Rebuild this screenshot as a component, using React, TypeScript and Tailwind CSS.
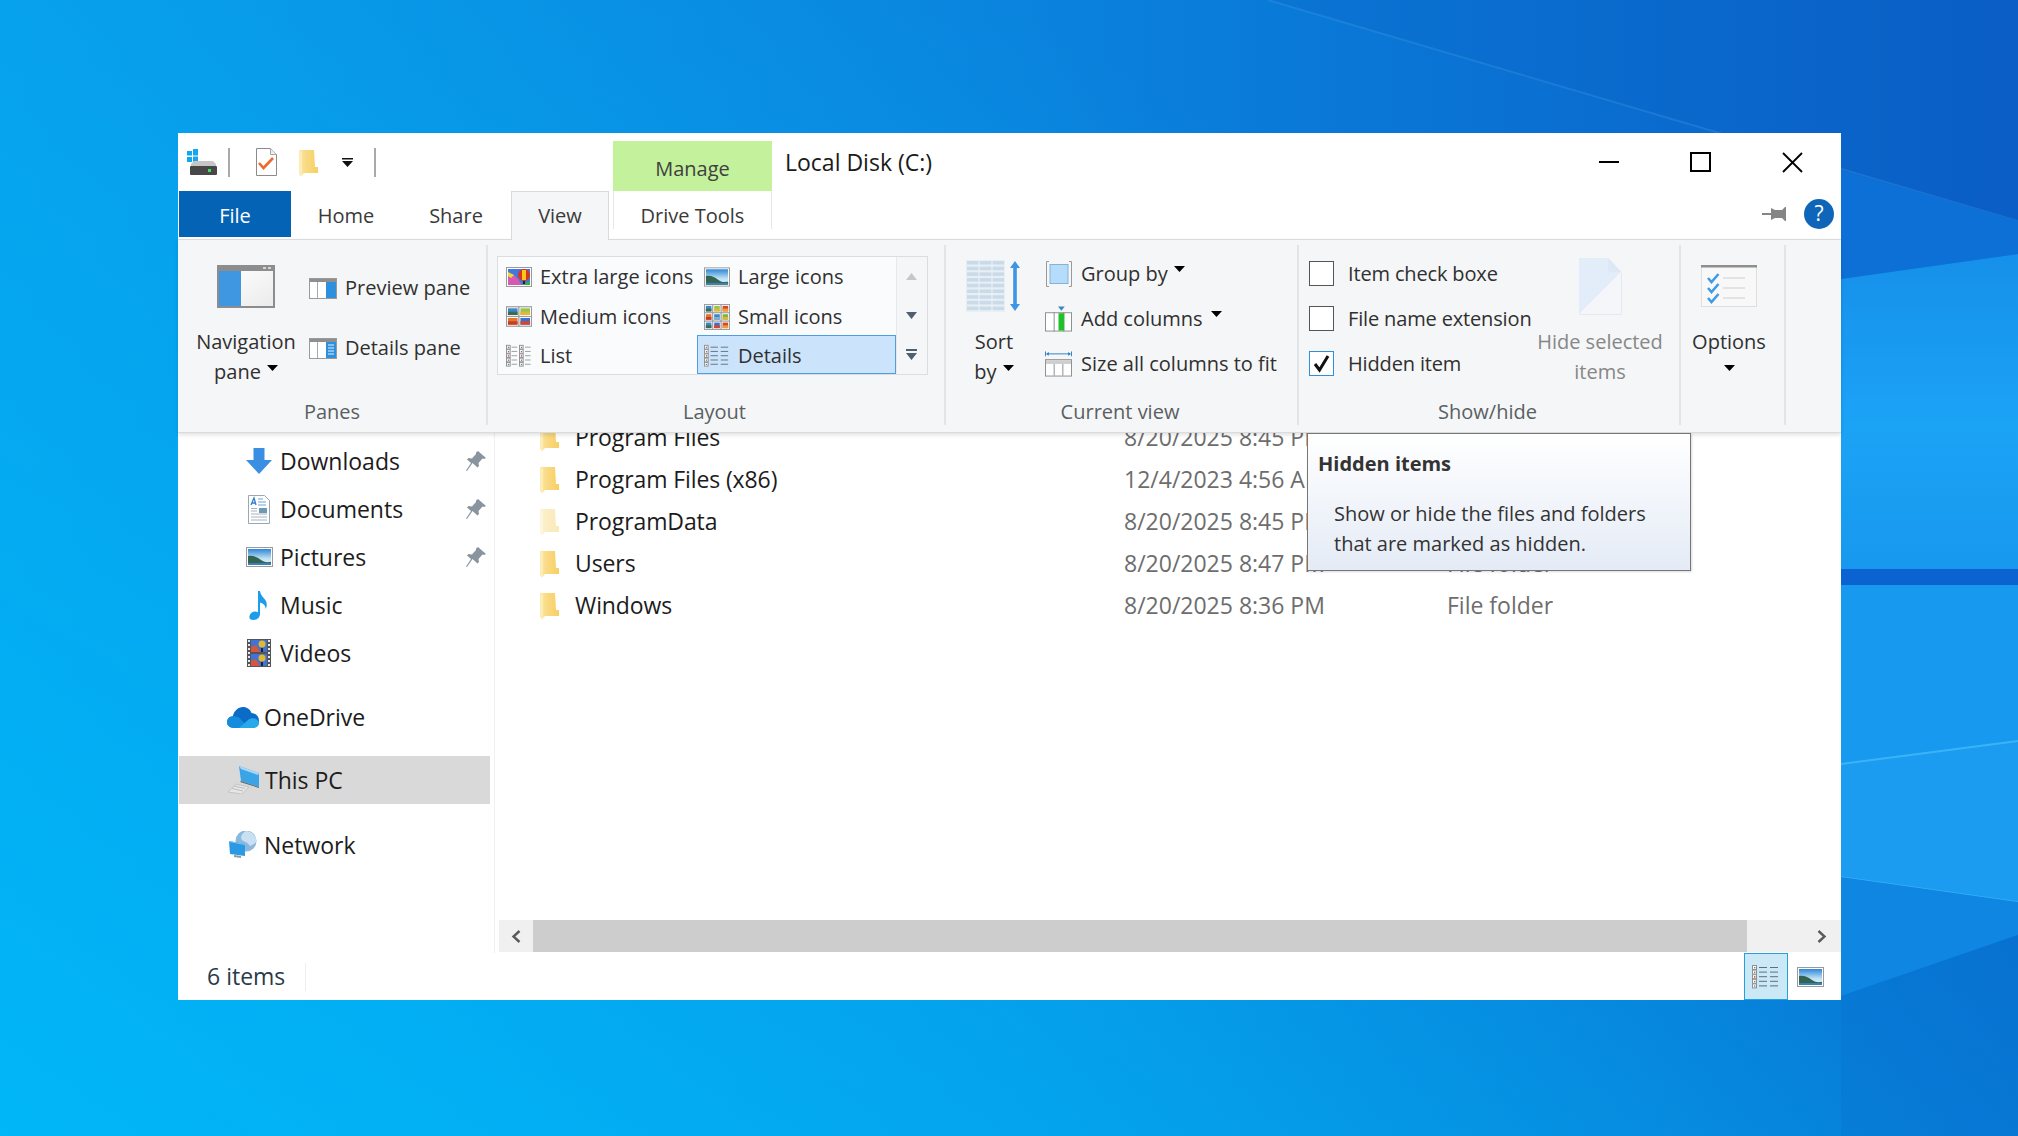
import { ReactNode } from "react";

const Caret = ({ className = "" }: { className?: string }) => (
  <svg width="11" height="6" viewBox="0 0 11 6" className={className}>
    <path d="M0 0h11L5.500 6z" fill="#000" />
  </svg>
);

function Wallpaper() {
  return (
    <svg className="absolute inset-0" width="2018" height="1136" viewBox="0 0 2018 1136">
      <defs>
        <linearGradient id="wall" x1="0" y1="0" x2="1" y2="0">
          <stop offset="0" stopColor="#0a97e8" />
          <stop offset="0.5" stopColor="#0a84de" />
          <stop offset="1" stopColor="#0a5ec6" />
        </linearGradient>
        <linearGradient id="low" x1="0" y1="1" x2="0.75" y2="0.25">
          <stop offset="0" stopColor="#00b8f8" stopOpacity="0.95" />
          <stop offset="1" stopColor="#00b8f8" stopOpacity="0" />
        </linearGradient>
        <linearGradient id="main" x1="0" y1="0" x2="0" y2="1">
          <stop offset="0" stopColor="#1690ea" />
          <stop offset="0.55" stopColor="#1ba3f6" />
          <stop offset="1" stopColor="#1798ee" />
        </linearGradient>
      </defs>
      <rect width="2018" height="1136" fill="url(#wall)" />
      <rect width="2018" height="1136" fill="url(#low)" />
      <polygon points="1268,0 2018,221 2018,0" fill="#0a5cc4" opacity="0.18" />
      <line x1="1268" y1="0" x2="2018" y2="221" stroke="#4fa8ea" strokeOpacity="0.25" strokeWidth="2" />
      <polygon points="1841,170 2018,221 2018,254 1841,279" fill="#0d70d6" />
      <polygon points="1841,279 2018,254 2018,569 1841,569" fill="url(#main)" />
      <rect x="1841" y="569" width="177" height="16" fill="#0a63d0" />
      <polygon points="1841,585 2018,585 2018,741 1841,764" fill="#1699ef" />
      <polygon points="1841,764 2018,741 2018,902 1841,877" fill="#1c9cf1" />
      <line x1="1841" y1="764" x2="2018" y2="741" stroke="#3ab4f7" strokeWidth="2" />
      <line x1="1841" y1="877" x2="2018" y2="902" stroke="#3ab0f5" strokeWidth="1.500" />
      <polygon points="1841,877 2018,902 2018,935 1841,996" fill="#0e86e2" />
      <polygon points="1841,996 2018,935 2018,1136 1841,1136" fill="#0a72d2" opacity="0.35" />
    </svg>
  );
}

function DriveIcon() {
  return (
    <svg width="30" height="26" viewBox="0 0 30 26">
      <path d="M0 2h5v4.500H0zM6 0h5v6.500H6zM0 8h5v5H0zM6 7.500h5v5.500H6z" fill="#12a8ef" />
      <path d="M4 15l3-3h19l3 3v3H4z" fill="#c6c6c6" />
      <rect x="3" y="17" width="27" height="9" rx="1" fill="#474747" />
      <rect x="21" y="20" width="3" height="3" fill="#3ce05a" />
    </svg>
  );
}

function CheckDocIcon() {
  return (
    <svg width="21" height="28" viewBox="0 0 21 28">
      <path d="M.5.500h14l6 6v21H.500z" fill="#fff" stroke="#8b8b8b" />
      <path d="M14.500.500v6h6" fill="#eee" stroke="#a5a5a5" />
      <path d="M3 15l4.500 5L17 10" fill="none" stroke="#ee6a2c" strokeWidth="2.600" />
    </svg>
  );
}

function FolderIcon({ pale = false }: { pale?: boolean }) {
  const id = pale ? "fpale" : "fnorm";
  return (
    <svg width="19" height="27" viewBox="0 0 19 27">
      <defs>
        <linearGradient id={id} x1="0" y1="0" x2="1" y2="0">
          <stop offset="0" stopColor={pale ? "#fdf3d0" : "#fde9a8"} />
          <stop offset="0.35" stopColor={pale ? "#fbeec5" : "#f9da84"} />
          <stop offset="1" stopColor={pale ? "#fbe9b8" : "#f7cf63"} />
        </linearGradient>
      </defs>
      <path d="M0 1h15l1 17h3v6H5l-3 3-2-2z" fill={`url(#${id})`} />
      <path d="M0 1l3 2v24l-1 0-2-2z" fill={pale ? "#fdf6de" : "#fcecb6"} />
    </svg>
  );
}

function NavPaneIcon() {
  return (
    <svg width="58" height="43" viewBox="0 0 58 43">
      <defs>
        <linearGradient id="nvr" x1="0" y1="0" x2="1" y2="1">
          <stop offset="0" stopColor="#fff" />
          <stop offset="1" stopColor="#ebebeb" />
        </linearGradient>
      </defs>
      <rect x="0" y="0" width="58" height="43" fill="#8d8d8d" />
      <rect x="2" y="6" width="54" height="35" fill="url(#nvr)" />
      <rect x="2" y="6" width="22" height="35" fill="#3e97e0" />
      <rect x="46" y="2" width="3" height="2" fill="#d5d5d5" />
      <rect x="51" y="2" width="3" height="2" fill="#d5d5d5" />
    </svg>
  );
}

function PaneIcon({ lines = false }: { lines?: boolean }) {
  return (
    <svg width="28" height="21" viewBox="0 0 28 21">
      <rect x=".5" y=".5" width="27" height="20" fill="#fff" stroke="#9a9a9a" />
      <rect x="1" y="1" width="26" height="3" fill="#8f8f8f" />
      <rect x="8" y="4" width="1" height="16" fill="#a9a9a9" />
      <rect x="17" y="4" width="10" height="16" fill="#2e8fdc" />
      {lines && <path d="M19 7h6M19 10h6M19 13h6M19 16h6" stroke="#e4f1fb" strokeWidth="1" />}
    </svg>
  );
}

function Landscape() {
  return (
    <svg width="27" height="20" viewBox="0 0 27 20">
      <defs>
        <linearGradient id="sky" x1="0" y1="0" x2="0" y2="1">
          <stop offset="0" stopColor="#2f86d8" />
          <stop offset="0.6" stopColor="#bfe2f2" />
          <stop offset="1" stopColor="#dff0f5" />
        </linearGradient>
      </defs>
      <rect x=".5" y=".5" width="26" height="19" fill="#fff" stroke="#9a9a9a" />
      <rect x="2" y="2" width="23" height="16" fill="url(#sky)" />
      <path d="M2 9c5-1 9 1 13 4s7 2 10 2v3H2z" fill="#34644f" />
      <path d="M2 16h23v2H2z" fill="#3a7fb8" />
    </svg>
  );
}

function BalloonIcon() {
  return (
    <svg width="26" height="20" viewBox="0 0 26 20">
      <rect x=".5" y=".5" width="25" height="19" fill="#fff" stroke="#9a9a9a" />
      <rect x="2" y="2" width="22" height="16" fill="#3f78e0" />
      <path d="M2 10l5-3 5 5 4 6H2z" fill="#d55bb0" />
      <path d="M2 5l6 3-3 3-3-2z" fill="#f1d83a" />
      <path d="M16 18l8-4v4z" fill="#3cae3c" />
      <ellipse cx="18" cy="8" rx="6" ry="6" fill="#d9341c" />
      <rect x="16" y="3" width="4" height="10" fill="#f7c91f" />
      <rect x="17" y="14" width="2" height="3" fill="#222" />
    </svg>
  );
}

const tileArt: [string, string][] = [
  ["#3f86c4", "#3d6a55"],
  ["#9ac24e", "#e2b83a"],
  ["#d9472b", "#e9a02f"],
  ["#e0772c", "#c53d27"],
  ["#3f86c4", "#7fb0d4"],
  ["#7ab648", "#d8b93a"],
  ["#3f86c4", "#3d6a55"],
  ["#3b6fd0", "#d8452a"],
  ["#d9472b", "#e9a02f"],
];

function Tiles({ cols, rows, cellW, cellH }: { cols: number; rows: number; cellW: number; cellH: number }) {
  const w = cols * cellW + 1;
  const h = rows * cellH + 1;
  const indexes = Array.from({ length: cols * rows }, (_, i) => i);
  return (
    <svg width={w} height={h} viewBox={`0 0 ${w} ${h}`}>
      <rect x=".5" y=".5" width={w - 1} height={h - 1} fill="#fff" stroke="#9a9a9a" />
      {indexes.map((i) => {
        const x = (i % cols) * cellW;
        const y = Math.floor(i / cols) * cellH;
        const [top, low] = tileArt[cols === 2 ? [0, 1, 3, 7][i] : i];
        return (
          <g key={i}>
            <rect x={x + 0.5} y={y + 0.5} width={cellW} height={cellH} fill="#fff" stroke="#9a9a9a" />
            <rect x={x + 2} y={y + 2} width={cellW - 3} height={cellH - 3} fill={top} />
            <rect x={x + 2} y={y + 2 + (cellH - 3) / 2} width={cellW - 3} height={(cellH - 3) / 2} fill={low} />
          </g>
        );
      })}
    </svg>
  );
}

function ListLines({ columns, dark = false }: { columns: 1 | 2; dark?: boolean }) {
  const rows = [0, 1, 2, 3, 4];
  const stroke = dark ? "#5f6f7c" : "#9a9a9a";
  return (
    <svg width="28" height="24" viewBox="0 0 28 24">
      {rows.map((i) => (
        <g key={i}>
          <rect x=".5" y={i * 4.6 + 0.5} width="4" height="4" fill="#fff" stroke="#8f8f8f" />
          <rect x="2" y={i * 4.6 + 2} width="1.400" height="1.400" fill={i === 2 ? "#b0412c" : "#6f7f8c"} />
          {columns === 1 ? (
            <>
              <path d={`M7 ${i * 4.6 + 2.5}h8`} stroke={stroke} />
              <path d={`M18 ${i * 4.6 + 2.5}h8`} stroke={stroke} />
            </>
          ) : (
            <>
              <rect x="14.500" y={i * 4.6 + 0.5} width="4" height="4" fill="#fff" stroke="#8f8f8f" />
              <rect x="16" y={i * 4.6 + 2} width="1.400" height="1.400" fill={i === 2 ? "#b0412c" : "#6f7f8c"} />
              <path d={`M6 ${i * 4.6 + 2.5}h6`} stroke={stroke} />
              <path d={`M20.500 ${i * 4.6 + 2.5}h6`} stroke={stroke} />
            </>
          )}
        </g>
      ))}
    </svg>
  );
}

function SortIcon() {
  const rows = Array.from({ length: 9 }, (_, i) => i);
  return (
    <svg width="56" height="52" viewBox="0 0 56 52">
      <rect x="0" y="0" width="39" height="52" fill="#e7eef4" />
      {rows.map((i) => (
        <rect key={i} x="1" y={i * 5.7 + 1} width="37" height="3.500" fill="#c9dbe9" />
      ))}
      <path d="M13 0v52M26 0v52" stroke="#eef3f7" />
      <path d="M49 1l5 7h-3.200v36H54l-5 7-5-7h3.200V8H44z" fill="#3d95e3" />
    </svg>
  );
}

function GroupByIcon() {
  return (
    <svg width="26" height="26" viewBox="0 0 26 26">
      <path d="M3 .500H.500v25H3M23 .500h2.500v25H23" fill="none" stroke="#9a9a9a" />
      <rect x="4" y="3.500" width="18" height="19" fill="#b6dcfb" stroke="#84b3d8" />
    </svg>
  );
}

function AddColumnsIcon() {
  return (
    <svg width="28" height="26" viewBox="0 0 28 26">
      <rect x=".5" y="6.500" width="27" height="19" fill="#fff" stroke="#8d8d8d" />
      <path d="M9.500 6v20M19.500 6v20" stroke="#8d8d8d" />
      <rect x="14" y="7" width="6" height="18" fill="#20c12b" />
      <path d="M13.500 0h7L17 4.500z" fill="#3d85c6" />
    </svg>
  );
}

function SizeAllIcon() {
  return (
    <svg width="28" height="26" viewBox="0 0 28 26">
      <path d="M.5 0v5M27.500 0v5" stroke="#2d7fc4" />
      <path d="M2 2.500h24" stroke="#2d7fc4" />
      <path d="M1 2.500L4 .500v4zM27 2.500L24 .500v4z" fill="#2d7fc4" />
      <rect x=".5" y="8.500" width="27" height="17" fill="#fff" stroke="#8d8d8d" />
      <rect x="1" y="9" width="26" height="4" fill="#cfcfcf" />
      <path d="M9.500 13v12M18.500 13v12" stroke="#8d8d8d" />
    </svg>
  );
}

function HideIcon() {
  return (
    <svg width="43" height="57" viewBox="0 0 43 57">
      <path d="M.5 .500h29l13 14v42H.500z" fill="#f4f6fa" stroke="#e6eaf0" />
      <path d="M0 0h29l1 14h12L0 56z" fill="#e3ecf9" />
      <path d="M29 0l13 14H29z" fill="#dde7f5" />
    </svg>
  );
}

function OptionsIcon() {
  const ys = [13, 23, 33];
  return (
    <svg width="56" height="42" viewBox="0 0 56 42">
      <rect x=".5" y="1" width="55" height="40.500" fill="#f8f8f8" stroke="#dedede" />
      <rect x="0" y="0" width="56" height="2.500" fill="#8e8e8e" />
      {ys.map((y) => (
        <g key={y}>
          <path d={`M7 ${y}l3.500 4 7-8`} fill="none" stroke="#3d9be8" strokeWidth="2.500" />
          <path d={`M22 ${y}h22`} stroke="#dcdcdc" strokeWidth="1.500" />
        </g>
      ))}
    </svg>
  );
}

function DownloadsIcon() {
  return (
    <svg width="26" height="26" viewBox="0 0 26 26">
      <path d="M7.500 0h11v12H26L13 26 0 12h7.500z" fill="#3a8fe2" />
    </svg>
  );
}

function DocumentsIcon() {
  return (
    <svg width="22" height="29" viewBox="0 0 22 29">
      <path d="M.5.500h16l5 5v23H.500z" fill="#fff" stroke="#9aa7b4" />
      <path d="M3 10l3-7 2 7M4 8h3" fill="none" stroke="#2f7fd0" strokeWidth="1.300" />
      <path d="M10 4h5M10 7h8M10 10h8" stroke="#6aa5da" />
      <rect x="11" y="13" width="8" height="5" fill="#6d9ab0" />
      <path d="M3 13.500h6M3 16h6M3 19h16M3 22h16M3 25h16" stroke="#a7b2bd" />
    </svg>
  );
}

function MusicIcon() {
  return (
    <svg width="20" height="29" viewBox="0 0 20 29">
      <path d="M9 0h2c.5 4 3 6 5 8.500 2.500 3.500 2 7 .5 9.500.3-3-1.500-5.500-5.500-6.500V23c0 3.500-3 6-6.500 6S0 27 .5 25c.5-2.500 3-4.500 5.500-4.500 1.200 0 2.200.3 3 .8z" fill="#1c9ce9" />
    </svg>
  );
}

function VideosIcon() {
  const holes = [1, 5, 9, 13, 17, 21, 25];
  return (
    <svg width="24" height="28" viewBox="0 0 24 28">
      <rect width="24" height="28" fill="#555" />
      {holes.map((y) => (
        <g key={y}>
          <rect x="1" y={y} width="2" height="2" fill="#e9e9e9" />
          <rect x="21" y={y} width="2" height="2" fill="#e9e9e9" />
        </g>
      ))}
      <rect x="4" y="1" width="16" height="12" fill="#3f73d8" />
      <rect x="4" y="15" width="16" height="12" fill="#3f73d8" />
      <path d="M4 13V8l5-2 4 7zM4 27v-5l5-2 4 7z" fill="#d8563c" />
      <circle cx="15" cy="5" r="3.500" fill="#e2b92b" />
      <circle cx="15" cy="19" r="3.500" fill="#e2b92b" />
      <path d="M14 9h2v4h-2zM14 23h2v4h-2z" fill="#222" />
    </svg>
  );
}

function OneDriveIcon() {
  return (
    <svg width="32" height="21" viewBox="0 0 32 21">
      <path d="M7 21C3 21 0 18.500 0 15.300 0 12 2.500 9.500 5.800 9.300 7 4 11 0 16 0c4 0 7.300 2.500 8.500 6C29 6.300 32 9.500 32 13.500S29 21 25 21z" fill="#0b6cc8" />
      <path d="M7 21C3 21 0 18.500 0 15.300 0 12 2.500 9.500 5.800 9.300c3-.5 5 .5 7 2l9 9.700z" fill="#1490df" opacity="0.9" />
      <path d="M12 21l9-8c2-1.800 6-2.500 8.500-.8 1.500 1 2.500 2.800 2.500 4.300 0 2.500-3 4.500-6 4.500z" fill="#28a8ea" />
    </svg>
  );
}

function ThisPcIcon() {
  return (
    <svg width="32" height="28" viewBox="0 0 32 28">
      <path d="M11 0l20 7v14L13 15z" fill="#3aa4e6" />
      <path d="M11 0l20 7-1 2L13 3z" fill="#a8d8f5" />
      <path d="M13 15l18 6v1L12 16z" fill="#5a6c7c" />
      <path d="M8 18l13 3-7 7-14-2z" fill="#e6e6e6" stroke="#c4c4c4" />
      <path d="M6 20l11 2.500M4 22.500l11 2.500" stroke="#bdbdbd" />
    </svg>
  );
}

function NetworkIcon() {
  return (
    <svg width="28" height="28" viewBox="0 0 28 28">
      <circle cx="17" cy="10" r="10.500" fill="#8cb8dd" />
      <path d="M17 0c-5 3-6 7-4 9s6 2 8 6c3-1 6-3 6.500-5C27 4 22 0 17 0z" fill="#c9e0f2" />
      <path d="M0 10l16 3v12L1 23z" fill="#2b9ae4" />
      <path d="M0 10l16 3v1L0 11z" fill="#7fc6f0" />
      <path d="M5 24l7 1v2l-7-1z" fill="#8a9aa6" />
    </svg>
  );
}

function PinIcon() {
  return (
    <svg width="20" height="20" viewBox="0 0 20 20">
      <path d="M12 0l8 7-2 1-1.500-.5-4 4.500.5 3-1.500 1.500L6.500 12 1 20l-1-.5L5 12 1 8.500 2.500 7l3.500.5 4-4.500L10 1.500z" fill="#8a949e" />
    </svg>
  );
}

function RibbonPin() {
  return (
    <svg width="24" height="16" viewBox="0 0 24 16">
      <path d="M0 7h9v2H0z" fill="#858585" />
      <path d="M9 2l4 2h7l3-3h1v14h-1l-3-3h-7l-4 2z" fill="#858585" />
    </svg>
  );
}

function ScrollArrow({ dir }: { dir: "left" | "right" }) {
  return (
    <svg width="10" height="13" viewBox="0 0 10 13">
      <path d={dir === "left" ? "M8.500 1L2.500 6.500l6 5.500" : "M1.500 1l6 5.500-6 5.500"} fill="none" stroke="#5a5a5a" strokeWidth="2.400" />
    </svg>
  );
}

function BigButton({
  icon,
  first,
  second,
  width,
  muted = false,
}: {
  icon: ReactNode;
  first: string;
  second?: ReactNode;
  width: string;
  muted?: boolean;
}) {
  return (
    <div className={`${width} flex flex-col items-center leading-[30px] ${muted ? "text-[#878787]" : "text-[#303030]"}`}>
      <div className="h-[82px] flex items-center">{icon}</div>
      <span className="whitespace-nowrap">{first}</span>
      <span className="whitespace-nowrap flex items-start gap-[6px] h-[30px]">{second}</span>
    </div>
  );
}

function Group({
  label,
  width,
  labelPad = "pr-[3px]",
  children,
}: {
  label: string;
  width: string;
  labelPad?: string;
  children: ReactNode;
}) {
  return (
    <div className={`${width} h-[180px] flex flex-col border-r-2 border-[#e3e4e5]`}>
      <div className="h-[154px] flex">{children}</div>
      <div className={`h-[26px] leading-[26px] text-center text-[#5a5f63] ${labelPad}`}>{label}</div>
    </div>
  );
}

function GalleryItem({ icon, label, active = false, pad }: { icon: ReactNode; label: string; active?: boolean; pad: string }) {
  return (
    <div
      className={`flex items-center gap-[8px] text-[#303030] ${pad} ${
        active ? "bg-[#cce4fb] border border-[#4f9ee0]" : ""
      }`}
    >
      <div className="w-[26px] flex justify-center shrink-0">{icon}</div>
      <span className="whitespace-nowrap">{label}</span>
    </div>
  );
}

function SmallRow({ icon, children }: { icon: ReactNode; children: ReactNode }) {
  return (
    <div className="h-[45px] flex items-center gap-[9px] text-[#303030] whitespace-nowrap">
      <div className="w-[27px] flex justify-center shrink-0">{icon}</div>
      {children}
    </div>
  );
}

function CheckRow({ label, checked = false }: { label: string; checked?: boolean }) {
  return (
    <div className="h-[45px] flex items-center gap-[14px] text-[#303030] whitespace-nowrap tracking-[-0.15px]">
      <div
        className={`w-[25px] h-[25px] shrink-0 bg-white flex items-center justify-center border ${
          checked ? "border-[#2f8fdf]" : "border-[#555]"
        }`}
      >
        {checked && (
          <svg width="17" height="19" viewBox="0 0 17 19">
            <path d="M2 10l4.500 6L15 2" fill="none" stroke="#111" strokeWidth="3" />
          </svg>
        )}
      </div>
      {label}
    </div>
  );
}

function Ribbon() {
  return (
    <div className="relative z-10 h-[194px] bg-[#f5f6f7] border-y border-[#dadbdc] pt-[5px] flex shadow-[0_2px_4px_rgba(0,0,0,0.12)] text-[20px]">
      <Group label="Panes" width="w-[310px]" labelPad="">
        <div className="pl-[12px] flex">
          <BigButton
            width="w-[112px]"
            icon={<NavPaneIcon />}
            first="Navigation"
            second={
              <>
                pane <Caret className="mt-[8px]" />
              </>
            }
          />
          <div className="ml-[7px] pt-[13px] flex flex-col text-[#303030]">
            <div className="h-[60px] flex items-center gap-[8px] whitespace-nowrap">
              <PaneIcon />
              Preview pane
            </div>
            <div className="h-[60px] flex items-center gap-[8px] whitespace-nowrap">
              <PaneIcon lines />
              Details pane
            </div>
          </div>
        </div>
      </Group>

      <Group label="Layout" width="w-[458px]">
        <div className="ml-[9px] mt-[11px] w-[431px] h-[119px] flex border border-[#dcdddf] bg-[#fafbfd]">
          <div className="w-[398px] grid grid-cols-[199px_199px] grid-rows-[39px_39px_39px]">
            <GalleryItem pad="pl-[8px]" icon={<BalloonIcon />} label="Extra large icons" />
            <GalleryItem pad="pl-[7px]" icon={<Landscape />} label="Large icons" />
            <GalleryItem pad="pl-[8px] pt-[2px]" icon={<Tiles cols={2} rows={2} cellW={13} cellH={10} />} label="Medium icons" />
            <GalleryItem pad="pl-[7px] pt-[2px]" icon={<Tiles cols={3} rows={3} cellW={9} cellH={9} />} label="Small icons" />
            <GalleryItem pad="pl-[8px] pt-[2px]" icon={<ListLines columns={2} />} label="List" />
            <GalleryItem pad="pl-[6px] pt-[2px]" icon={<ListLines columns={1} dark />} label="Details" active />
          </div>
          <div className="flex-1 bg-[#f5f6f7] border-l border-[#e8e9ea] flex flex-col items-center pr-[2px]">
            <div className="h-[39px] flex items-center">
              <svg width="11" height="7" viewBox="0 0 11 7">
                <path d="M5.500 0L11 7H0z" fill="#c4c8cc" />
              </svg>
            </div>
            <div className="h-[39px] flex items-center">
              <svg width="11" height="7" viewBox="0 0 11 7">
                <path d="M0 0h11L5.500 7z" fill="#4f5f6f" />
              </svg>
            </div>
            <div className="h-[39px] flex items-center">
              <svg width="11" height="11" viewBox="0 0 11 11">
                <path d="M0 0h11v2H0zM0 4h11L5.500 11z" fill="#4f5f6f" />
              </svg>
            </div>
          </div>
        </div>
      </Group>

      <Group label="Current view" width="w-[353px]">
        <div className="ml-[13px] flex">
          <BigButton
            width="w-[70px]"
            icon={<SortIcon />}
            first="Sort"
            second={
              <>
                by <Caret className="mt-[8px]" />
              </>
            }
          />
          <div className="ml-[16px] pt-[6px] flex flex-col">
            <SmallRow icon={<GroupByIcon />}>
              Group by <Caret className="mb-[10px] -ml-[3px]" />
            </SmallRow>
            <SmallRow icon={<AddColumnsIcon />}>
              Add columns <Caret className="mb-[10px] -ml-[1px]" />
            </SmallRow>
            <SmallRow icon={<SizeAllIcon />}>Size all columns to fit</SmallRow>
          </div>
        </div>
      </Group>

      <Group label="Show/hide" width="w-[382px]">
        <div className="ml-[10px] flex">
          <div className="w-[228px] pt-[6px] flex flex-col overflow-hidden">
            <CheckRow label="Item check boxe" />
            <CheckRow label="File name extension" />
            <CheckRow label="Hidden item" checked />
          </div>
          <div className="-ml-[2px]">
            <BigButton width="w-[130px]" icon={<HideIcon />} first="Hide selected" second="items" muted />
          </div>
        </div>
      </Group>

      <Group label="" width="w-[105px]">
        <div className="ml-[3px]">
          <BigButton width="w-[90px]" icon={<OptionsIcon />} first="Options" second={<Caret className="mt-[8px]" />} />
        </div>
      </Group>
    </div>
  );
}

function NavRow({ icon, label, pinned }: { icon: ReactNode; label: string; pinned?: boolean }) {
  return (
    <div className="h-[48px] pl-[67px] pr-[8px] flex items-center">
      <div className="w-[28px] flex justify-center shrink-0">{icon}</div>
      <span className="ml-[7px]">{label}</span>
      {pinned && (
        <span className="ml-auto">
          <PinIcon />
        </span>
      )}
    </div>
  );
}

function NavTop({ icon, label, className = "" }: { icon: ReactNode; label: string; className?: string }) {
  return (
    <div className={`h-[48px] pl-[49px] flex items-center ${className}`}>
      <div className="w-[32px] flex justify-center shrink-0">{icon}</div>
      <span className="ml-[5px]">{label}</span>
    </div>
  );
}

const files: { name: string; date: string; pale?: boolean }[] = [
  { name: "Program Files", date: "8/20/2025 8:45 PM" },
  { name: "Program Files (x86)", date: "12/4/2023 4:56 AM" },
  { name: "ProgramData", date: "8/20/2025 8:45 PM", pale: true },
  { name: "Users", date: "8/20/2025 8:47 PM" },
  { name: "Windows", date: "8/20/2025 8:36 PM" },
];

export default function App() {
  return (
    <div className="relative w-[2018px] h-[1136px] overflow-hidden pl-[178px] pt-[133px] font-['Open_Sans',sans-serif]">
      <Wallpaper />
      <div className="relative w-[1663px] h-[867px] bg-white flex flex-col">
        {/* title row */}
        <div className="h-[58px] flex items-center pl-[9px] shrink-0">
          <DriveIcon />
          <div className="ml-[11px] w-[2px] h-[29px] bg-[#a9a9a9]" />
          <div className="ml-[26px]">
            <CheckDocIcon />
          </div>
          <div className="ml-[22px]">
            <FolderIcon />
          </div>
          <div className="ml-[24px]">
            <svg width="11" height="9" viewBox="0 0 11 9">
              <path d="M0 0h11v1.500H0zM0 3h11L5.500 9z" fill="#111" />
            </svg>
          </div>
          <div className="ml-[21px] w-[2px] h-[29px] bg-[#a9a9a9]" />
          <div className="ml-[237px] self-end w-[159px] h-[50px] bg-[#c3f19c] text-[#404040] text-[20px] text-center leading-[56px]">
            Manage
          </div>
          <div className="ml-[13px] text-[23px] text-[#1a1a1a]">Local Disk (C:)</div>
          <div className="ml-auto flex items-center">
            <div className="w-[20px] h-[2px] bg-black" />
            <div className="ml-[71px] w-[21px] h-[20px] border-2 border-black" />
            <svg className="ml-[71px] mr-[38px]" width="21" height="21" viewBox="0 0 21 21">
              <path d="M1 1l19 19M20 1L1 20" stroke="#000" strokeWidth="1.800" />
            </svg>
          </div>
        </div>

        {/* tabs */}
        <div className="h-[48px] shrink-0 flex text-[20px] text-[#3a3a3a] pl-[1px] relative">
          <div className="w-[112px] h-[46px] pt-[3px] bg-[#0563b5] text-white flex items-center justify-center">File</div>
          <div className="w-[110px] pt-[1px] flex items-center justify-center">Home</div>
          <div className="w-[110px] pt-[1px] flex items-center justify-center">Share</div>
          <div className="w-[98px] h-[49px] bg-[#f5f6f7] border-x border-t border-[#d9dadb] flex items-center justify-center z-20">View</div>
          <div className="ml-[4px] w-[159px] h-[38px] border-x border-[#e6e6e6] flex items-start pt-[10px] justify-center">Drive Tools</div>
          <div className="ml-auto flex items-center pb-[2px]">
            <RibbonPin />
            <div className="ml-[18px] mr-[7px] w-[30px] h-[30px] rounded-full bg-[#0f66b8] text-white text-[21px] flex items-center justify-center">?</div>
          </div>
        </div>

        <Ribbon />

        {/* body */}
        <div className="h-[520px] flex text-[23px] text-[#1c1c1c]">
          <div className="w-[317px] shrink-0 border-r border-[#f1f1f1] pt-[4px]">
            <NavRow icon={<DownloadsIcon />} label="Downloads" pinned />
            <NavRow icon={<DocumentsIcon />} label="Documents" pinned />
            <NavRow icon={<Landscape />} label="Pictures" pinned />
            <NavRow icon={<MusicIcon />} label="Music" />
            <NavRow icon={<VideosIcon />} label="Videos" />
            <NavTop className="mt-[16px]" icon={<OneDriveIcon />} label="OneDrive" />
            <NavTop className="mt-[15px] mr-[4px] ml-[1px] pl-[48px] bg-[#d9d9d9]" icon={<ThisPcIcon />} label="This PC" />
            <NavTop className="mt-[17px]" icon={<NetworkIcon />} label="Network" />
          </div>

          <div className="flex-1 min-w-0 flex flex-col">
            <div className="flex-1 min-h-0 overflow-hidden">
              <div className="-mt-[17px]">
                {files.map((f) => (
                  <div key={f.name} className="h-[42px] pl-[45px] flex items-center">
                    <div className="w-[18px] shrink-0">
                      <FolderIcon pale={f.pale} />
                    </div>
                    <span className="ml-[17px] w-[549px] shrink-0 tracking-[-0.1px]">{f.name}</span>
                    <span className="w-[323px] shrink-0 text-[#6d6d6d]">{f.date}</span>
                    <span className="text-[#6d6d6d]">File folder</span>
                  </div>
                ))}
              </div>
            </div>
            <div className="h-[32px] mb-[1px] ml-[4px] shrink-0 flex bg-[#f0f0f0]">
              <div className="w-[33px] flex items-center justify-center">
                <ScrollArrow dir="left" />
              </div>
              <div className="ml-[1px] w-[1214px] bg-[#cdcdcd]" />
              <div className="flex-1 flex items-center justify-end pr-[14px]">
                <ScrollArrow dir="right" />
              </div>
            </div>
          </div>
        </div>

        {/* status bar */}
        <div className="h-[47px] flex items-center text-[23px] text-[#2a3a4a]">
          <span className="ml-[29px]">6 items</span>
          <div className="ml-[20px] w-px h-[28px] bg-[#eeeeee]" />
          <div className="ml-auto h-full w-[44px] bg-[#cbe8f6] border border-[#26a0da] flex items-center justify-center">
            <ListLines columns={1} dark />
          </div>
          <div className="ml-[9px] mr-[17px]">
            <Landscape />
          </div>
        </div>

        {/* tooltip */}
        <div className="absolute z-30 left-[1129px] top-[300px] w-[384px] h-[138px] border border-[#767676] bg-[linear-gradient(#ffffff,#e4ebf6)] shadow-[1px_1px_2px_rgba(0,0,0,0.15)] text-[#333]">
          <div className="pl-[10px] pt-[12px] font-bold text-[20px] leading-[36px]">Hidden items</div>
          <div className="pl-[26px] pt-[17px] text-[20px] leading-[30px]">
            Show or hide the files and folders
            <br />
            that are marked as hidden.
          </div>
        </div>
      </div>
    </div>
  );
}
